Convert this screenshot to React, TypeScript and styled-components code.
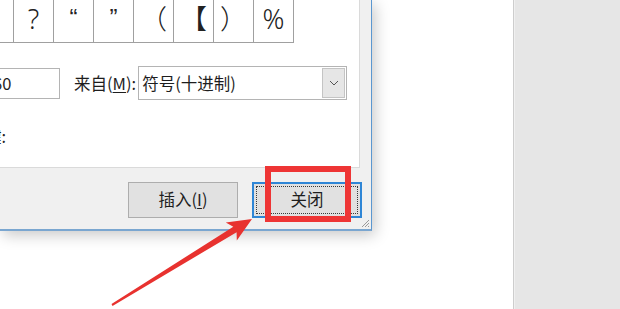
import { FC } from "react";
import styled, { createGlobalStyle } from "styled-components";

const GlobalStyle = createGlobalStyle`
  html, body {
    margin: 0;
    padding: 0;
    overflow: hidden;
    background: #fff;
  }
`;

const recentSymbols = ["", "?", "\u201C", "\u201D", "（", "【", "）", "%"];
const isQuote = (s: string) => s === "\u201C" || s === "\u201D";

const Desk = styled.div`
  display: flex;
  width: 620px;
  height: 309px;
  font-family: "Noto Sans CJK SC", "Liberation Sans", sans-serif;
  color: #1e1e1e;
`;

const DocumentArea = styled.main`
  position: relative;
  flex: 0 0 513px;
  background: #fff;
  overflow: hidden;
`;

const SidePanel = styled.aside`
  flex: 1;
  background: #e6e6e6;
  border-left: 1px solid #cdcdcd;
  box-shadow: inset 1px 0 0 #f0f0f0;
`;

const Dialog = styled.section`
  position: absolute;
  left: 0;
  top: 0;
  width: 372px;
  height: 231px;
  box-sizing: border-box;
  display: flex;
  flex-direction: column;
  background: #f0f0f0;
  border-right: 1px solid #5b97d0;
  border-bottom: 2px solid #7aa6d0;
  box-shadow: 3px 4px 14px rgba(0, 0, 0, 0.22);
`;

const TabPage = styled.div`
  width: 360px;
  height: 168px;
  box-sizing: border-box;
  display: flex;
  flex-direction: column;
  background: #fff;
  border-right: 1px solid #dadada;
  border-bottom: 1px solid #dadada;
`;

const SymbolGrid = styled.div`
  display: flex;
  width: 294px;
  height: 43px;
  box-sizing: border-box;
  border-right: 1px solid #a0a0a0;
  border-bottom: 1px solid #a0a0a0;
`;

const SymbolCell = styled.div<{ $first?: boolean; $quote?: boolean }>`
  width: ${(p) => (p.$first ? "13px" : "40px")};
  box-sizing: border-box;
  border-left: ${(p) => (p.$first ? "none" : "1px solid #a0a0a0")};
  display: flex;
  align-items: center;
  justify-content: center;
  padding-bottom: 6px;
  font-family: ${(p) =>
    p.$quote ? `"Liberation Sans", sans-serif` : `"Noto Sans", "Noto Sans CJK SC", sans-serif`};
  font-weight: ${(p) => (p.$quote ? 400 : 300)};
  font-size: ${(p) => (p.$quote ? "24px" : "27px")};
  line-height: 1;
  color: #222;
`;

const CodeRow = styled.div`
  display: flex;
  align-items: center;
  height: 34px;
  margin-top: 23px;
  margin-left: -11px;
`;

const CodeInput = styled.div`
  width: 71px;
  height: 31px;
  box-sizing: border-box;
  display: flex;
  align-items: center;
  padding-left: 3px;
  border: 1px solid #b4b4b4;
  background: #fff;
  font-size: 16.5px;
`;

const Label = styled.span`
  margin-left: 14px;
  font-size: 16.5px;
  white-space: nowrap;
  u {
    text-decoration-thickness: 1px;
    text-underline-offset: 2px;
  }
`;

const Combo = styled.div`
  display: flex;
  align-items: stretch;
  width: 209px;
  height: 34px;
  margin-left: 2px;
  padding: 1px;
  box-sizing: border-box;
  border: 1px solid #b4b4b4;
  background: #fff;
`;

const ComboValue = styled.span`
  flex: 1;
  display: flex;
  align-items: center;
  padding-left: 2px;
  font-size: 16.5px;
  white-space: nowrap;
`;

const DropButton = styled.span`
  width: 23px;
  display: flex;
  align-items: center;
  justify-content: center;
  box-sizing: border-box;
  border: 1px solid #c4c4c4;
  background: #e6e6e6;
`;

const NameRow = styled.div`
  margin-top: 25px;
  margin-left: -48px;
  font-size: 16.5px;
  line-height: 22px;
  white-space: nowrap;
`;

const ButtonBar = styled.div`
  flex: 1;
  display: flex;
  justify-content: flex-end;
  align-items: flex-start;
  gap: 14px;
  padding: 14px 9px 0 0;
`;

const DialogButton = styled.button<{ $default?: boolean }>`
  position: relative;
  width: 110px;
  height: 36px;
  box-sizing: border-box;
  margin: 0;
  padding: 0 0 2px;
  font-family: inherit;
  font-size: 16.5px;
  color: #1e1e1e;
  background: #e1e1e1;
  border: ${(p) => (p.$default ? "2px solid #2f86d6" : "1px solid #adadad")};
  u {
    text-decoration-thickness: 1px;
    text-underline-offset: 2px;
  }
  &::after {
    content: "";
    display: ${(p) => (p.$default ? "block" : "none")};
    position: absolute;
    inset: 2px;
    border: 1px dotted #3a3a3a;
  }
`;

const Grip = styled.svg`
  position: absolute;
  right: 1px;
  bottom: 1px;
`;

const Highlight = styled.div`
  position: absolute;
  left: 265px;
  top: 166px;
  width: 86px;
  height: 56px;
  box-sizing: border-box;
  border: 6px solid #ee3535;
`;

const ArrowLayer = styled.svg`
  position: absolute;
  left: 0;
  top: 0;
  pointer-events: none;
`;

const App: FC = () => {
  return (
    <>
      <GlobalStyle />
      <Desk>
        <DocumentArea>
          <Dialog>
            <TabPage>
              <SymbolGrid>
                {recentSymbols.map((s, i) => (
                  <SymbolCell key={i} $first={i === 0} $quote={isQuote(s)}>
                    {s}
                  </SymbolCell>
                ))}
              </SymbolGrid>
              <CodeRow>
                <CodeInput>60</CodeInput>
                <Label>
                  来自(<u>M</u>):
                </Label>
                <Combo>
                  <ComboValue>符号(十进制)</ComboValue>
                  <DropButton>
                    <svg width="10" height="6" viewBox="0 0 10 6">
                      <path d="M1 1 L5 5 L9 1" fill="none" stroke="#555" strokeWidth="1" />
                    </svg>
                  </DropButton>
                </Combo>
              </CodeRow>
              <NameRow>快捷键:</NameRow>
            </TabPage>
            <ButtonBar>
              <DialogButton>
                插入(<u>I</u>)
              </DialogButton>
              <DialogButton $default>关闭</DialogButton>
            </ButtonBar>
            <Grip width="10" height="10" viewBox="0 0 10 10">
              <path d="M9 2 L2 9 M9 5 L5 9 M9 8 L8 9" stroke="#9a9a9a" strokeWidth="1" />
            </Grip>
          </Dialog>
          <Highlight />
          <ArrowLayer width="513" height="309" viewBox="0 0 513 309">
            <polygon
              points="252,219 236.8,240.6 236.6,232.2 112.5,306 111.5,304 233.3,226.7 225.8,222.6"
              fill="#e8322f"
            />
          </ArrowLayer>
        </DocumentArea>
        <SidePanel />
      </Desk>
    </>
  );
};

export default App;
